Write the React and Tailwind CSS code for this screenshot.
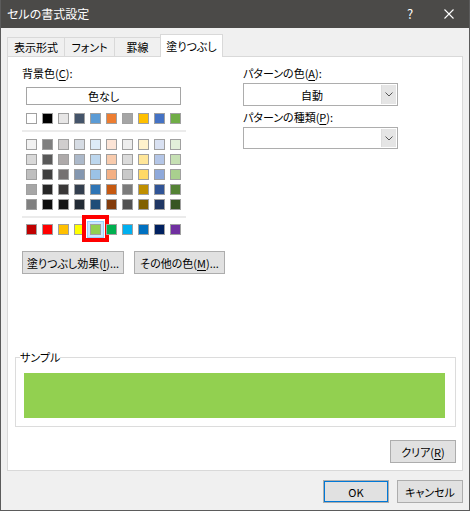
import React from "react";

const themeRows = [
  ["#FFFFFF", "#000000", "#E7E6E6", "#44546A", "#5B9BD5", "#ED7D31", "#A5A5A5", "#FFC000", "#4472C4", "#70AD47"],
];
const shadeRows = [
  ["#F2F2F2", "#7F7F7F", "#D0CECE", "#D6DCE4", "#DDEBF7", "#FCE4D6", "#EDEDED", "#FFF2CC", "#D9E1F2", "#E2EFDA"],
  ["#D9D9D9", "#595959", "#AEAAAA", "#ACB9CA", "#BDD7EE", "#F8CBAD", "#DBDBDB", "#FFE699", "#B4C6E7", "#C6E0B4"],
  ["#BFBFBF", "#404040", "#757171", "#8497B0", "#9BC2E6", "#F4B084", "#C9C9C9", "#FFD966", "#8EA9DB", "#A9D08E"],
  ["#A6A6A6", "#262626", "#3A3838", "#333F4F", "#2F75B5", "#C65911", "#7B7B7B", "#BF8F00", "#305496", "#548235"],
  ["#808080", "#0D0D0D", "#161616", "#222B35", "#1F4E78", "#833C0C", "#525252", "#806000", "#203764", "#375623"],
];
const standard = ["#C00000", "#FF0000", "#FFC000", "#FFFF00", "#92D050", "#00B050", "#00B0F0", "#0070C0", "#002060", "#7030A0"];

function Swatch({ color, selected }) {
  return (
    <div className="relative w-[11px] h-[11px]">
      {selected && (
        <>
          <div className="absolute top-[-9px] bottom-[-7px] left-[-8px] right-[-8px] border-[4px] border-[#ff0000]" />
          <div className="absolute -inset-[3px] border border-[#99d1ff] bg-[#cce8ff]" />
        </>
      )}
      <div
        className="relative w-[11px] h-[11px] border border-[#a0a0a0]"
        style={{ backgroundColor: color }}
      />
    </div>
  );
}

function Row({ colors, selectedIndex = -1 }) {
  return (
    <div className="flex gap-[5px] ml-[4px]">
      {colors.map((c, i) => (
        <Swatch key={i} color={c} selected={i === selectedIndex} />
      ))}
    </div>
  );
}

function Btn({ children, className = "" }) {
  return (
    <div
      className={
        "h-[23px] flex items-center justify-center bg-[#e1e1e1] border border-[#adadad] text-black " +
        className
      }
    >
      {children}
    </div>
  );
}

function Select({ value, h }) {
  return (
    <div className={"flex w-[155px] border border-[#adadad] bg-white " + h}>
      <div className="flex-1 flex items-center justify-center">{value}</div>
      <div className="w-[15px] m-px bg-[#e5e5e5] border-l border-[#dcdcdc] flex items-center justify-center">
        <svg width="8" height="5" viewBox="0 0 8 5">
          <path d="M0.5 0.5 L4 4 L7.5 0.5" fill="none" stroke="#555" strokeWidth="1" />
        </svg>
      </div>
    </div>
  );
}

const U = ({ children }) => <span className="underline underline-offset-2">{children}</span>;

export default function App() {
  return (
    <div className="w-[470px] h-[511px] bg-[#f0f0f0] flex flex-col border-x border-b border-[#5b5b5b] overflow-hidden font-['Noto_Sans_CJK_JP',sans-serif] text-[11px] leading-[16px] text-black [font-feature-settings:'palt']">
      {/* Title bar */}
      <div className="h-[28px] shrink-0 bg-[#4b4a48] flex items-center text-white text-[12px]">
        <div className="pl-[6px] flex-1">セルの書式設定</div>
        <div className="w-[20px] text-[13px] mr-[24px] text-center">?</div>
        <div className="mr-[15px] flex items-center">
          <svg width="10" height="10" viewBox="0 0 10 10">
            <path d="M0.5 0.5 L9.5 9.5 M9.5 0.5 L0.5 9.5" stroke="#fff" strokeWidth="1.1" fill="none" />
          </svg>
        </div>
      </div>

      {/* Tabs */}
      <div className="mt-[6px] h-[22px] flex items-end pl-[6px] shrink-0">
        <div className="w-[57px] h-[19px] border-l border-t border-[#d9d9d9] flex items-center justify-center">表示形式</div>
        <div className="w-[50px] h-[19px] border-l border-t border-[#d9d9d9] flex items-center justify-center">フォント</div>
        <div className="w-[46px] h-[19px] border-l border-t border-[#d9d9d9] flex items-center justify-center">罫線</div>
        <div className="relative z-10 w-[63px] h-[23px] -mb-px border-x border-t border-[#d9d9d9] bg-white flex items-center justify-center">塗りつぶし</div>
      </div>

      {/* Panel */}
      <div className="ml-[6px] w-[456px] h-[415px] shrink-0 border border-[#d9d9d9] bg-white flex flex-col">
        <div className="flex pt-[8px]">
          {/* Left column */}
          <div className="ml-[14px] w-[164px] flex flex-col">
            <div className="h-[16px]">背景色(<U>C</U>):</div>
            <div className="mt-[6px] ml-[4px] w-[155px] h-[18px] border border-[#a5a5a5] flex items-center justify-center">色なし</div>
            <div className="mt-[8px]">
              <Row colors={themeRows[0]} />
            </div>
            <div className="mt-[6px] h-[2px] bg-[#ebebeb]" />
            <div className="mt-[7px] flex flex-col gap-[4px]">
              {shadeRows.map((r, i) => (
                <Row key={i} colors={r} />
              ))}
            </div>
            <div className="mt-[6px] h-[2px] bg-[#ebebeb]" />
            <div className="mt-[6px]">
              <Row colors={standard} selectedIndex={4} />
            </div>
            <div className="mt-[16px] flex gap-[10px] w-[220px]">
              <Btn className="w-[102px]">塗りつぶし効果(<U>I</U>)...</Btn>
              <Btn className="w-[91px]">その他の色(<U>M</U>)...</Btn>
            </div>
          </div>

          {/* Right column */}
          <div className="ml-[57px] w-[155px] flex flex-col">
            <div className="h-[16px]">パターンの色(<U>A</U>):</div>
            <div className="mt-[2px]">
              <Select value="自動" h="h-[23px]" />
            </div>
            <div className="mt-[3px] h-[16px]">パターンの種類(<U>P</U>):</div>
            <div className="mt-[2px]">
              <Select value="" h="h-[22px]" />
            </div>
          </div>
        </div>

        {/* Sample */}
        <fieldset className="mt-[75px] ml-[7px] w-[441px] border border-[#dcdcdc] pl-[4px] pb-[8px]">
          <legend className="leading-[16px]">サンプル</legend>
          <div className="mt-[8px] ml-[4px] w-[421px] h-[45px] bg-[#92d050]" />
        </fieldset>

        <div className="mt-[13px] flex justify-end pr-[6px]">
          <Btn className="w-[66px]">クリア(<U>R</U>)</Btn>
        </div>
      </div>

      {/* Bottom buttons */}
      <div className="mt-[9px] flex justify-end gap-[8px] pr-[6px]">
        <Btn className="w-[66px] h-[22px] border-[#0078d7] shadow-[inset_0_0_0_1px_#0078d7]">OK</Btn>
        <Btn className="w-[66px] h-[22px]">キャンセル</Btn>
      </div>
    </div>
  );
}
